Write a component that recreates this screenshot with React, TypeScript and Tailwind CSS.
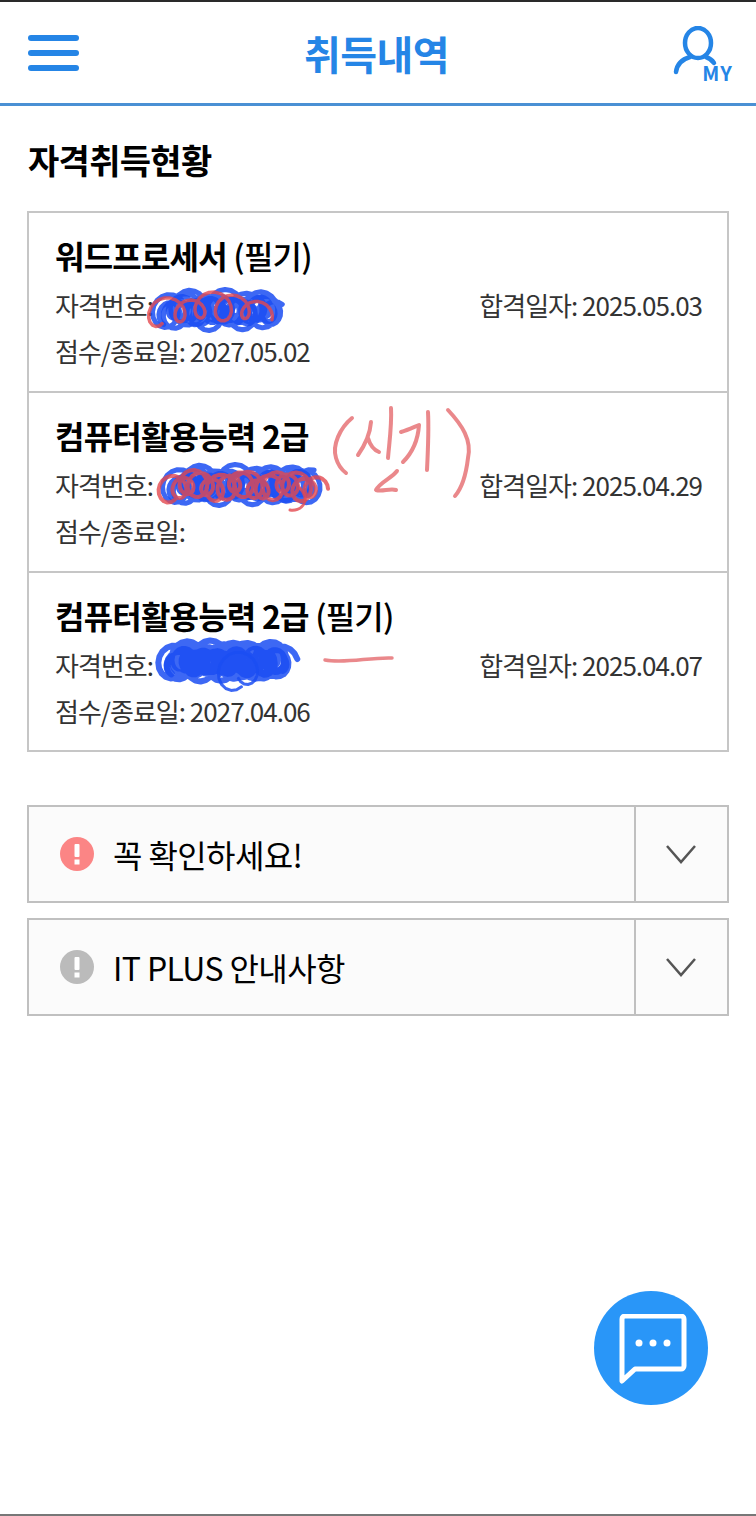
import React from 'react';

const font = { fontFamily: '"Noto Sans CJK KR", "Noto Sans", sans-serif' };

type Cert = { name: React.ReactNode; date: string; end: string; height: string };

const certs: Cert[] = [
  { name: <>워드프로세서 <span className="font-medium">(필기)</span></>, date: '2025.05.03', end: '2027.05.02', height: 'h-[180px] border-b-2' },
  { name: <>컴퓨터활용능력 2급</>, date: '2025.04.29', end: '', height: 'h-[180px] border-b-2' },
  { name: <>컴퓨터활용능력 2급 <span className="font-medium">(필기)</span></>, date: '2025.04.07', end: '2027.04.06', height: 'h-[177px]' },
];

// looping pen line from x0 to x1, for the scribbles over the licence numbers
function scribble(x0: number, x1: number, cy: number, r: number, speed: number, phase = 0) {
  const pts: string[] = [];
  for (let t = 0; x0 + speed * t < x1; t += 0.35) {
    const rr = r * (0.8 + 0.2 * Math.sin(t * 0.37 + phase));
    const x = x0 + speed * t + rr * 0.9 * Math.cos(t + phase);
    const y = cy + rr * Math.sin(t + phase) + 3 * Math.sin(t * 0.21 + phase);
    pts.push(`${x.toFixed(1)} ${y.toFixed(1)}`);
  }
  return 'M' + pts.join(' L');
}

function CertRow({ cert }: { cert: Cert }) {
  return (
    <div className={`${cert.height} border-[#c6c6c6] pl-[26px] pr-[25px] pt-[21px]`}>
      <div className="h-[42px] text-[32px] leading-[42px] font-bold tracking-[-0.8px] text-black">{cert.name}</div>
      <div className="mt-[5px] flex h-[46px] items-center justify-between text-[26px] tracking-[-1px] text-[#333]">
        <span>자격번호:</span>
        <span>합격일자: {cert.date}</span>
      </div>
      <div className="flex h-[46px] items-center text-[26px] tracking-[-1px] text-[#333]">
        점수/종료일:{cert.end && ` ${cert.end}`}
      </div>
    </div>
  );
}

function Notice({ color, label }: { color: string; label: string }) {
  return (
    <div className="flex h-[98px] border-2 border-[#c0c0c0] bg-[#fbfbfb]">
      <div className="flex flex-1 items-center border-r-2 border-[#c0c0c0] pl-[30px]">
        <svg width="36" height="36" viewBox="0 0 36 36">
          <circle cx="18" cy="18" r="17" fill={color} />
          <rect x="15.5" y="8" width="5" height="13" rx="1" fill="#fff" />
          <rect x="15.5" y="23.5" width="5" height="5" fill="#fff" />
        </svg>
        <span className="ml-[18px] text-[32px] tracking-[-0.6px] text-black">{label}</span>
      </div>
      <div className="flex w-[91px] items-center justify-center">
        <svg width="34" height="24" viewBox="0 0 34 24" fill="none" stroke="#555" strokeWidth="2.5" className="mr-[2px]">
          <path d="M3 4 L17 20 L31 4" />
        </svg>
      </div>
    </div>
  );
}

export default function App() {
  return (
    <div className="relative h-[1516px] w-[756px] overflow-hidden bg-white" style={font}>
      <div className="h-[2px] bg-[#2a2a2a]" />
      <header className="flex h-[104px] items-center justify-between border-b-[3px] border-[#4a90d4] pl-[28px] pr-[23px]">
        <svg width="52" height="40" viewBox="0 0 52 40" fill="#2585e6" className="mt-[3px]">
          <rect x="0" y="1" width="51" height="6" rx="3" />
          <rect x="0" y="16" width="51" height="6" rx="3" />
          <rect x="0" y="31" width="51" height="6" rx="3" />
        </svg>
        <h1 className="text-[40px] font-bold tracking-[-0.5px] text-[#2585e6]">취득내역</h1>
        <div className="relative mt-[3px] h-[56px] w-[60px]">
          <svg width="60" height="56" viewBox="0 0 60 56" fill="none" stroke="#2585e6" strokeWidth="4.5" strokeLinecap="round">
            <ellipse cx="25" cy="17" rx="13" ry="15" />
            <path d="M3 46 C4 38 10 33 17 31 M33 31 C36 32 39 34 41 37" />
          </svg>
          <span className="absolute bottom-[-3px] right-0 text-[20px] font-bold leading-[24px] tracking-[1px] text-[#2585e6]">MY</span>
        </div>
      </header>

      <main className="px-[27px]">
        <h2 className="ml-px mt-[29px] h-[50px] text-[34px] leading-[50px] font-bold tracking-[-0.7px] text-black">자격취득현황</h2>
        <div className="mt-[26px] border-2 border-[#c6c6c6]">
          {certs.map((c, i) => (
            <CertRow key={i} cert={c} />
          ))}
        </div>
        <div className="mt-[53px] flex flex-col gap-[15px]">
          <Notice color="#fb8585" label="꼭 확인하세요!" />
          <Notice color="#bbbbbb" label="IT PLUS 안내사항" />
        </div>
      </main>

      {/* pen marks drawn on the screenshot */}
      <svg className="pointer-events-none absolute left-0 top-0" width="756" height="1516" fill="none" strokeLinecap="round" strokeLinejoin="round">
        <g stroke="#1b4df2" strokeOpacity="0.85" strokeWidth="5">
          <path d={scribble(165, 275, 310, 18, 1.1)} />
          <path d={scribble(168, 272, 311, 12, 0.9, 2)} />
          <path d={scribble(175, 312, 485, 18, 1.1)} />
          <path d={scribble(178, 308, 486, 12, 0.9, 2)} />
          <path d={scribble(172, 282, 661, 18, 0.7)} strokeWidth="6" />
          <path d={scribble(175, 280, 662, 10, 0.6, 2)} strokeWidth="7" />
          <path d={scribble(232, 248, 668, 20, 2, 1)} strokeWidth="3" />
        </g>
        <g stroke="#e4484f" strokeOpacity="0.8">
          <path d={scribble(155, 265, 309, 15, 3.5, 1)} strokeWidth="3.5" />
          <path d={scribble(168, 318, 486, 14, 1.5, 1)} strokeWidth="4" />
          <path d="M300 488 C312 502 300 512 290 510" strokeWidth="3" />
        </g>
        <g stroke="#e56a6e" strokeOpacity="0.8" strokeWidth="4">
          <path d="M352 418 C340 428 332 445 336 458 C338 465 342 470 346 473" />
          <path d="M371 422 C370 435 365 445 358 455 M368 438 C370 445 374 450 379 452 M391 408 C392 425 389 445 388 458" />
          <path d="M397 471 C392 478 380 482 376 490 C382 492 390 488 396 490" />
          <path d="M401 432 C408 430 414 427 419 425 C418 440 413 452 403 462 M428 412 C429 430 428 450 427 470" />
          <path d="M448 410 C462 425 472 440 468 458 C466 475 462 488 455 496" />
          <path d="M325 660 C345 664 370 657 392 658" strokeWidth="3.5" />
        </g>
      </svg>

      <button className="absolute left-[594px] top-[1291px] flex h-[114px] w-[114px] items-center justify-center rounded-full bg-[#2996f8]">
        <svg width="70" height="70" viewBox="0 0 70 70" fill="none" className="ml-[6px] mt-[1px]">
          <path d="M3 5 a3 3 0 0 1 3 -3 H62 a3 3 0 0 1 3 3 V52 a3 3 0 0 1 -3 3 H16 L3 67 Z" stroke="#fff" strokeWidth="5" strokeLinejoin="round" />
          <circle cx="20" cy="29" r="3.5" fill="#fff" />
          <circle cx="34" cy="29" r="3.5" fill="#fff" />
          <circle cx="48" cy="29" r="3.5" fill="#fff" />
        </svg>
      </button>

      <div className="absolute bottom-0 left-0 h-[2px] w-full bg-[#777]" />
    </div>
  );
}
